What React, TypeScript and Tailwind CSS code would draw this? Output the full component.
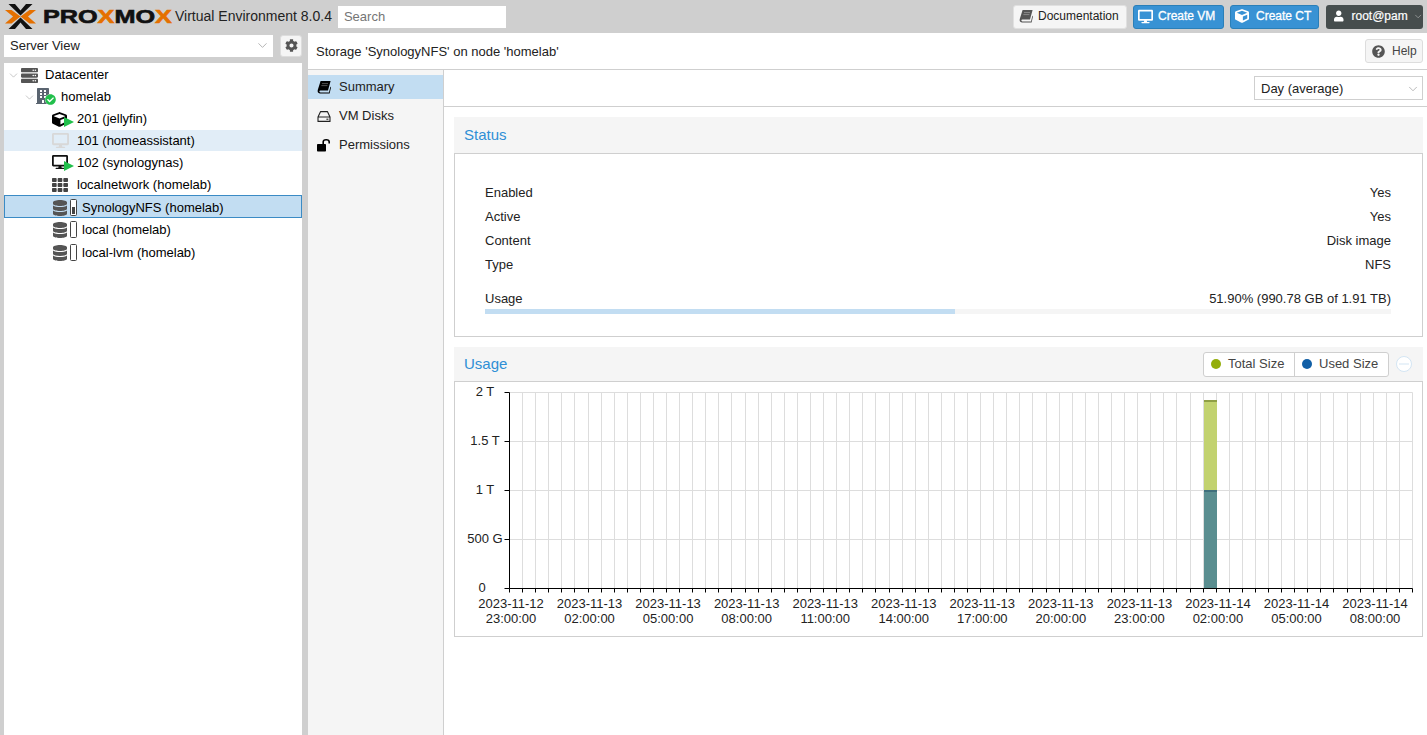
import React from "react";
import { FaDesktop, FaCube, FaUser, FaCog, FaQuestionCircle, FaDatabase, FaTh, FaServer, FaBuilding, FaCheckCircle } from "react-icons/fa";
import { ChevronDown } from "lucide-react";

const Play = () => (
  <svg className="absolute left-[12px] top-[7px]" width="10" height="10" viewBox="0 0 10 10"><path d="M0 0L10 5L0 10Z" fill="#21bf4b" /></svg>
);

const Book = ({ color = "#000" }: { color?: string }) => (
  <svg width="14" height="14" viewBox="0 0 14 14">
    <path d="M3.6 1H13.6L11 10.6H3.4C2 10.6 2 12.4 3.4 12.4H12L13.4 6.6L14 7.4L12.6 13.4H3C0.8 13.4 0.2 11.6 0.9 9.6Z" fill={color} />
    <path d="M5 3.6H11M4.4 5.6H10.4" stroke="#fff" strokeOpacity="0.45" strokeWidth="0.7" />
  </svg>
);

const Hdd = () => (
  <svg width="14" height="14" viewBox="0 0 14 14" fill="none" stroke="#222" strokeWidth="1.1">
    <path d="M1 8L3.6 2.6H10.4L13 8V12.4H1Z M1 8H13" strokeLinejoin="round" />
    <path d="M9.4 10.2H11.4" />
  </svg>
);

const Unlock = () => (
  <svg width="14" height="14" viewBox="0 0 14 14">
    <rect x="0" y="6" width="9" height="7.5" rx="0.8" fill="#000" />
    <path d="M6.2 6.5V3.8C6.2 1 12.2 1 12.2 3.8V5.4" fill="none" stroke="#000" strokeWidth="1.6" />
  </svg>
);

const Gauge = ({ fill }: { fill: number }) => (
  <svg width="7" height="17" viewBox="0 0 7 17" className="ml-[2px]">
    <rect x="0.5" y="0.5" width="6" height="16" rx="1" fill="#fff" stroke="#444" />
    {fill > 0 && <rect x="2" y={15 - fill} width="3" height={fill} fill="#444" />}
  </svg>
);

const Storage = ({ fill }: { fill: number }) => (
  <div className="flex w-[30px] items-center">
    <FaDatabase size={16} color="#555" />
    <Gauge fill={fill} />
  </div>
);

type Row = { label: string; indent: number; chev?: boolean; icon: React.ReactNode; cls?: string; text: number; h: string };

const rows: Row[] = [
  { label: "Datacenter", indent: 7, chev: true, text: 45, h: "h-[22px]", icon: <span className="ml-[1px] block w-[18px]"><FaServer size={17} color="#555" /></span> },
  { label: "homelab", indent: 23, chev: true, text: 61, h: "h-[22px]", icon: <span className="relative -ml-[1px] block h-[18px] w-[18px]"><FaBuilding size={16} color="#5a6470" /><span className="absolute left-[10px] top-[6px] rounded-full bg-white"><FaCheckCircle size={11} color="#21bf4b" /></span></span> },
  { label: "201 (jellyfin)", indent: 52, text: 77, h: "h-[22px]", icon: <span className="relative block h-[18px] w-[18px]"><FaCube size={15} color="#000" className="mt-[2px]" /><Play /></span> },
  { label: "101 (homeassistant)", indent: 52, text: 77, h: "h-[21px]", cls: "bg-[#e1edf7]", icon: <span className="block h-[18px] w-[18px]"><FaDesktop size={17} color="#d8d8d8" /></span> },
  { label: "102 (synologynas)", indent: 52, text: 77, h: "h-[23px]", icon: <span className="relative block h-[18px] w-[18px]"><FaDesktop size={16} color="#111" /><Play /></span> },
  { label: "localnetwork (homelab)", indent: 52, text: 77, h: "h-[21px]", icon: <span className="block h-[18px] w-[18px] pt-[1px]"><FaTh size={16} color="#444" /></span> },
  { label: "SynologyNFS (homelab)", indent: 52, text: 82, h: "h-[23px] pt-[2px]", cls: "bg-[#c2ddf2] outline outline-1 -outline-offset-1 outline-[#3b8bc5]", icon: <Storage fill={7} /> },
  { label: "local (homelab)", indent: 52, text: 82, h: "h-[23px]", icon: <Storage fill={0} /> },
  { label: "local-lvm (homelab)", indent: 52, text: 82, h: "h-[23px]", icon: <Storage fill={0} /> },
];

const TreeRow = ({ r }: { r: Row }) => (
  <div className={`flex items-center ${r.h} ${r.cls ?? ""}`}>
    <div className="flex items-center" style={{ width: r.text - 4, paddingLeft: r.indent - 4 }}>
      {r.chev && <ChevronDown size={13} strokeWidth={1} color="#999" />}
      {r.icon}
    </div>
    <span className="text-[13px] text-black">{r.label}</span>
  </div>
);

const Top = () => (
  <div className="flex h-[33px] shrink-0 items-center bg-[#cfcfcf]">
    <svg width="31" height="25" viewBox="0 0 31 25" className="ml-[5px]">
      <path d="M0 6H6.5L15.5 12.5L6.5 19.5H0L8 12.5Z M31 6H24.5L15.5 12.5L24.5 19.5H31L23 12.5Z" fill="#e57000" />
      <path d="M3.5 0H10L15.5 6.5L21 0H27.5L15.5 11.5Z M3.5 25H10L15.5 18.5L21 25H27.5L15.5 13.5Z" fill="#111" />
    </svg>
    <span className="ml-[7px] inline-block w-[132px] origin-left scale-x-[1.4] font-['Liberation_Sans',sans-serif] text-[18px] font-bold leading-none text-[#111] [-webkit-text-stroke:0.6px_#111]">
      PRO<span className="text-[#e57000] [-webkit-text-stroke:0.6px_#e57000]">X</span>MO<span className="text-[#e57000] [-webkit-text-stroke:0.6px_#e57000]">X</span>
    </span>
    <span className="text-[14px] text-[#222]">Virtual Environment 8.0.4</span>
    <div className="ml-[6px] flex h-[22px] w-[168px] items-center bg-white px-[6px] text-[13px] text-[#757575]">Search</div>
    <div className="ml-auto flex h-[24px] items-center gap-[6px] pr-[4px] text-[12px]">
      <div className="flex h-full w-[114px] items-center gap-[5px] rounded-[3px] border border-[#e0e0e0] bg-[#f5f5f5] pb-[1px] pl-[5px] text-[#222]">
        <Book color="#555" />Documentation
      </div>
      <div className="flex h-full w-[91px] items-center gap-[5px] rounded-[3px] border border-[#2a7fb8] bg-[#3892d4] pb-[1px] pl-[4px] text-white [-webkit-text-stroke:0.3px_#fff]">
        <FaDesktop size={15} />Create VM
      </div>
      <div className="flex h-full w-[89px] items-center gap-[7px] rounded-[3px] border border-[#2a7fb8] bg-[#3892d4] pb-[1px] pl-[4px] text-white [-webkit-text-stroke:0.3px_#fff]">
        <FaCube size={14} />Create CT
      </div>
      <div className="ml-[1px] flex h-full w-[97px] items-center gap-[8px] rounded-[3px] bg-[#464d4d] pb-[1px] pl-[8px] text-white [-webkit-text-stroke:0.2px_#fff]">
        <FaUser size={12} />root@pam
        <ChevronDown size={13} strokeWidth={1.2} color="#ccc" className="-ml-[3px]" />
      </div>
    </div>
  </div>
);

const Left = () => (
  <div className="ml-[4px] flex w-[298px] shrink-0 flex-col">
    <div className="mt-[1px] flex h-[23px] items-center justify-between">
      <div className="flex h-[22px] w-[269px] items-center justify-between bg-white pl-[6px] pr-[3px] text-[13px] text-[#222]">
        Server View
        <ChevronDown size={15} strokeWidth={1} color="#888" />
      </div>
      <div className="flex h-[22px] w-[22px] items-center justify-center rounded-[3px] border border-[#ddd] bg-[#f5f5f5]">
        <FaCog size={13} color="#555" />
      </div>
    </div>
    <div className="mt-[6px] flex-1 bg-white pt-[1px]">
      {rows.map((r) => <TreeRow key={r.label} r={r} />)}
    </div>
  </div>
);

const Nav = () => (
  <div className="w-[136px] shrink-0 border-r border-[#cfcfcf] bg-[#f5f5f5] pt-[5px] text-[13px] text-[#222]">
    <div className="flex h-[24px] items-center gap-[8px] bg-[#c2ddf2] pl-[9px]"><span className="block w-[14px]"><Book /></span>Summary</div>
    <div className="mt-[5px] flex h-[24px] items-center gap-[8px] pl-[9px]"><span className="block w-[14px]"><Hdd /></span>VM Disks</div>
    <div className="mt-[5px] flex h-[24px] items-center gap-[8px] pl-[9px]"><span className="block w-[14px]"><Unlock /></span>Permissions</div>
  </div>
);

const StatusRow = ({ a, b }: { a: string; b: string }) => (
  <div className="flex h-[24px] items-center justify-between text-[13px] text-[#222]"><span>{a}</span><span>{b}</span></div>
);

const Status = () => (
  <div>
    <div className="flex h-[36px] items-center bg-[#f5f5f5] pl-[10px] text-[15px] text-[#2f8fd5]">Status</div>
    <div className="h-[184px] border border-[#cfcfcf] bg-white pl-[30px] pr-[31px] pt-[27px]">
      <StatusRow a="Enabled" b="Yes" />
      <StatusRow a="Active" b="Yes" />
      <StatusRow a="Content" b="Disk image" />
      <StatusRow a="Type" b="NFS" />
      <div className="mt-[10px]"><StatusRow a="Usage" b="51.90% (990.78 GB of 1.91 TB)" /></div>
      <div className="mt-[-2px] h-[5px] bg-[#f5f5f5]"><div className="h-full bg-[#c2ddf2]" style={{ width: "51.9%" }} /></div>
    </div>
  </div>
);

const Chart = () => {
  const X0 = 54.5, Y0 = 10.5, STEP = 903 / 69, W = 903;
  const xs = Array.from({ length: 70 }, (_, i) => Math.round(X0 + i * STEP - 0.5) + 0.5);
  const ys = [0, 1, 2, 3, 4].map((i) => Y0 + i * 49);
  const yl = ["2 T", "1.5 T", "1 T", "500 G", "0"];
  const dates = ["2023-11-12", "2023-11-13", "2023-11-13", "2023-11-13", "2023-11-13", "2023-11-13", "2023-11-13", "2023-11-13", "2023-11-13", "2023-11-14", "2023-11-14", "2023-11-14"];
  const times = ["23:00:00", "02:00:00", "05:00:00", "08:00:00", "11:00:00", "14:00:00", "17:00:00", "20:00:00", "23:00:00", "02:00:00", "05:00:00", "08:00:00"];
  const bottom = ys[4];
  const barX = 749, barW = 13;
  return (
    <svg width="966" height="254" className="block" fontFamily="'Liberation Sans', sans-serif" fontSize="13" fill="#222">
      {xs.slice(1).map((x) => <line key={x} x1={x} x2={x} y1={Y0} y2={bottom} stroke="#ddd" />)}
      {ys.slice(0, 4).map((y) => <line key={y} x1={X0} x2={X0 + W} y1={y} y2={y} stroke="#ddd" />)}
      <rect x={barX} y={18} width={barW} height={90} fill="#c2d26f" />
      <rect x={barX} y={108} width={barW} height={bottom - 108} fill="#5a8e90" />
      <rect x={barX} y={18} width={barW} height={2} fill="#8f9f45" />
      <rect x={barX} y={108} width={barW} height={2} fill="#3f6f7c" />
      <line x1={X0} x2={X0} y1={Y0} y2={bottom} stroke="#000" />
      <line x1={X0} x2={X0 + W} y1={bottom} y2={bottom} stroke="#000" />
      {ys.map((y, i) => (
        <g key={y}>
          <line x1={X0 - 5} x2={X0} y1={y} y2={y} stroke="#000" />
          <text x={i === 4 ? 27 : 30} y={y + 3} textAnchor="middle" fill="#222">{yl[i]}</text>
        </g>
      ))}
      {xs.map((x) => <line key={x} x1={x} x2={x} y1={bottom} y2={bottom + 4} stroke="#000" />)}
      {dates.map((d, i) => (
        <g key={i} textAnchor="middle">
          <text x={X0 + 1.5 + i * 78.55} y={226}>{d}</text>
          <text x={X0 + 1.5 + i * 78.55} y={241}>{times[i]}</text>
        </g>
      ))}
    </svg>
  );
};

const Usage = () => (
  <div className="mt-[10px]">
    <div className="flex h-[34px] items-center bg-[#f5f5f5] pl-[10px] text-[15px] text-[#2f8fd5]">
      Usage
      <div className="ml-auto flex h-[25px] items-center rounded-[3px] border border-[#cfcfcf] bg-white text-[13px] text-[#444]">
        <div className="flex h-full w-[91px] items-center gap-[7px] border-r border-[#cfcfcf] pl-[7px]"><span className="h-[10px] w-[10px] rounded-full bg-[#94ae0a]" />Total Size</div>
        <div className="flex h-full w-[93px] items-center gap-[7px] pl-[7px]"><span className="h-[10px] w-[10px] rounded-full bg-[#115fa6]" />Used Size</div>
      </div>
      <svg width="16" height="16" viewBox="0 0 16 16" className="ml-[7px] mr-[11px]"><circle cx="8" cy="8" r="7.5" fill="#fff" stroke="#d3e5f3" /><line x1="3" x2="13" y1="8" y2="8" stroke="#d3e5f3" /></svg>
    </div>
    <div className="h-[256px] border border-[#cfcfcf] bg-white"><Chart /></div>
  </div>
);

export default function App() {
  return (
    <div className="flex h-[735px] w-[1427px] flex-col overflow-hidden bg-[#cfcfcf] font-['Liberation_Sans',Arial,sans-serif]">
      <Top />
      <div className="flex min-h-0 flex-1">
        <Left />
        <div className="ml-[6px] flex min-w-0 flex-1 flex-col bg-white">
          <div className="flex h-[37px] shrink-0 items-center justify-between border-b border-[#cfcfcf] pl-[8px] pr-[4px] text-[13px] text-[#222]">
            <span className="pt-[1px]">Storage 'SynologyNFS' on node 'homelab'</span>
            <div className="flex h-[24px] w-[58px] items-center gap-[7px] rounded-[3px] border border-[#ddd] bg-[#f5f5f5] pl-[6px] text-[12px] text-[#444]">
              <FaQuestionCircle size={13} color="#555" />Help
            </div>
          </div>
          <div className="flex min-h-0 flex-1">
            <Nav />
            <div className="min-w-0 flex-1">
              <div className="flex h-[37px] items-center justify-end border-b border-[#cfcfcf] pr-[4px]">
                <div className="flex h-[24px] w-[169px] items-center justify-between border border-[#cfcfcf] bg-white pl-[6px] pr-[2px] pt-[1px] text-[13px] text-[#222]">
                  Day (average)
                  <ChevronDown size={14} strokeWidth={1} color="#888" />
                </div>
              </div>
              <div className="pl-[10px] pr-[4px] pt-[10px]">
                <Status />
                <Usage />
              </div>
            </div>
          </div>
        </div>
      </div>
    </div>
  );
}
